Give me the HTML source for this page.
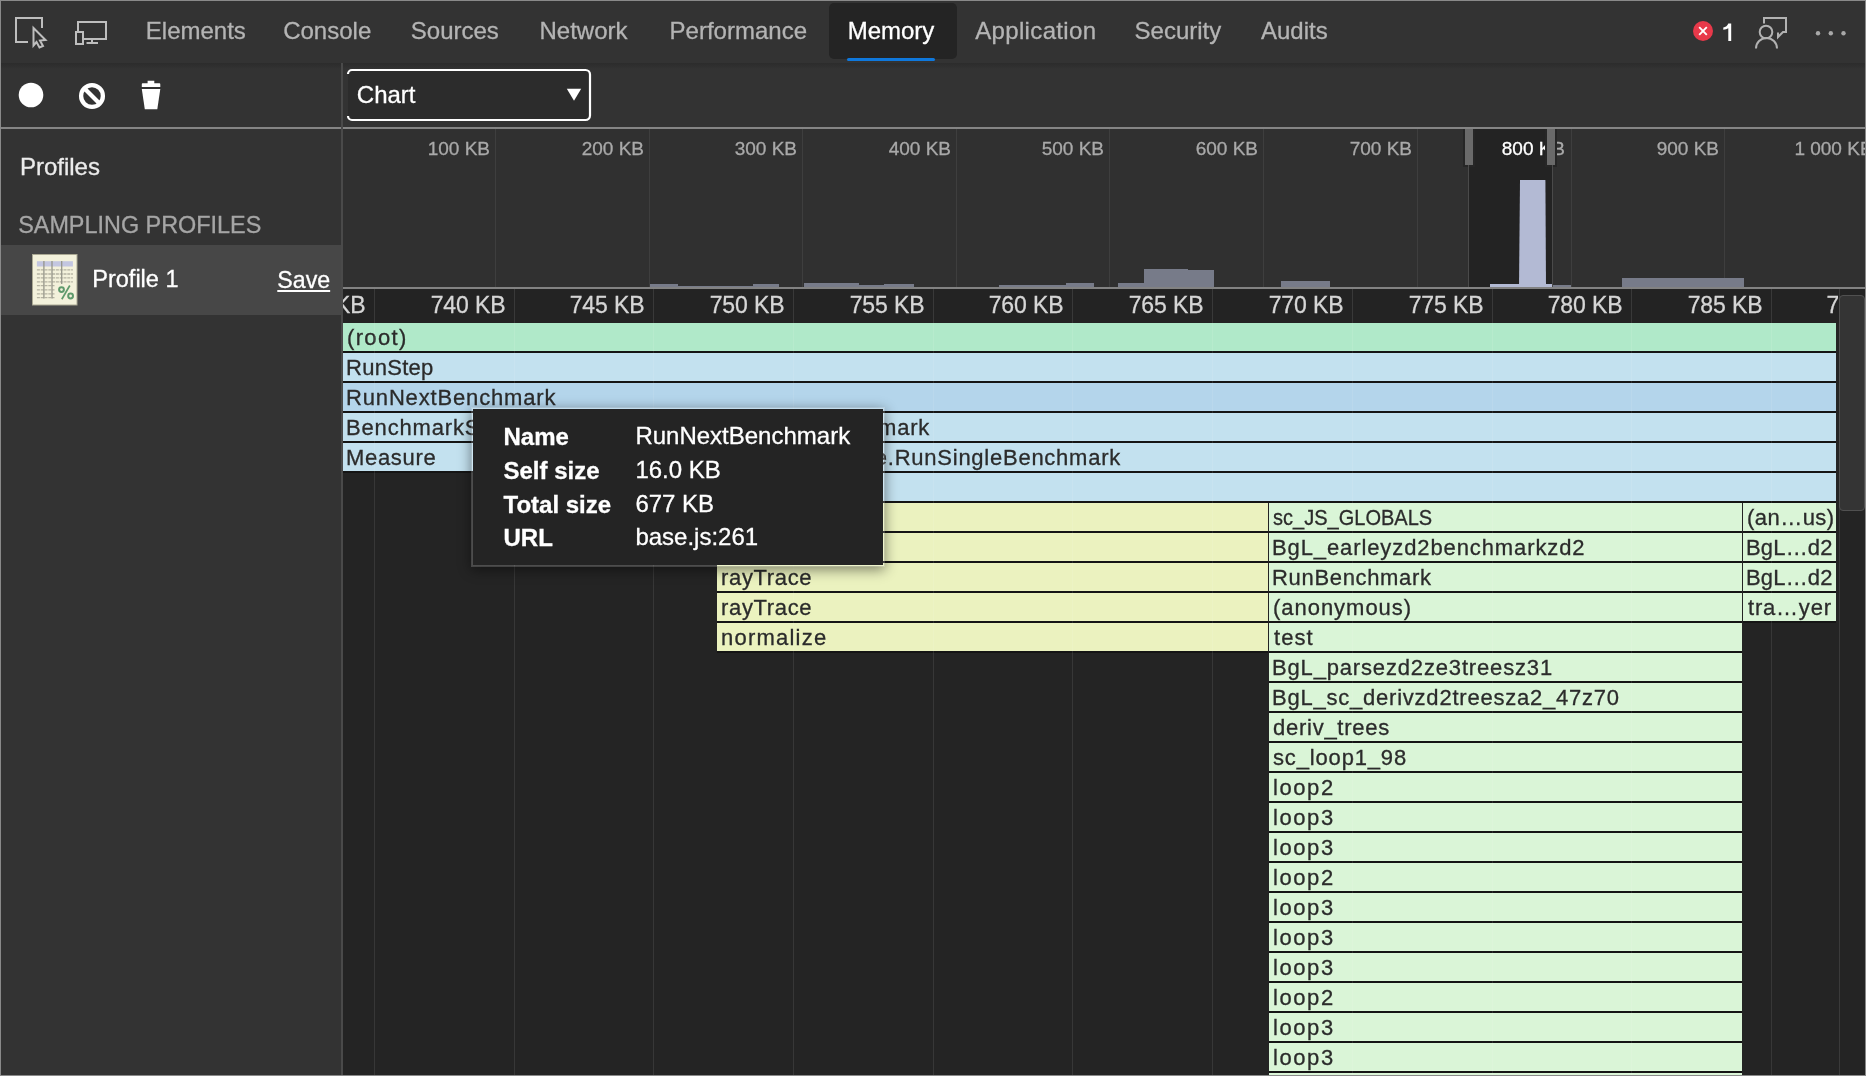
<!DOCTYPE html>
<html><head><meta charset="utf-8"><style>
*{-webkit-font-smoothing:antialiased;-webkit-text-stroke-width:0.3px;}
html,body{margin:0;padding:0;width:1866px;height:1076px;overflow:hidden;background:#242424;font-family:"Liberation Sans", sans-serif;}
#root{will-change:transform;position:relative;width:1866px;height:1076px;overflow:hidden;}
</style></head><body><div id="root">
<div style="position:absolute;left:0px;top:0px;width:1866px;height:63px;background:#333333;"></div>
<div style="position:absolute;left:0px;top:63px;width:1866px;height:65px;background:#333333;"></div>
<div style="position:absolute;left:0;top:63px;width:1866px;height:6px;background:linear-gradient(#2c2c2c,#2e2e2e 35%,#333333)"></div>
<div style="position:absolute;left:829px;top:3px;width:128px;height:56px;background:#242424;border-radius:5px;"></div>
<div style="position:absolute;left:847px;top:58px;width:88px;height:3px;background:#0f78dc;border-radius:2px;"></div>
<div style="position:absolute;left:145.8px;top:18.68px;font-size:24px;line-height:24px;color:#b4b4b4;font-weight:normal;white-space:nowrap;">Elements</div>
<div style="position:absolute;left:283.2px;top:18.68px;font-size:24px;line-height:24px;color:#b4b4b4;font-weight:normal;white-space:nowrap;">Console</div>
<div style="position:absolute;left:410.8px;top:18.68px;font-size:24px;line-height:24px;color:#b4b4b4;font-weight:normal;white-space:nowrap;">Sources</div>
<div style="position:absolute;left:539.5px;top:18.68px;font-size:24px;line-height:24px;color:#b4b4b4;font-weight:normal;white-space:nowrap;">Network</div>
<div style="position:absolute;left:669.6px;top:18.68px;font-size:24px;line-height:24px;color:#b4b4b4;font-weight:normal;white-space:nowrap;">Performance</div>
<div style="position:absolute;left:847.7px;top:18.68px;font-size:24px;line-height:24px;color:#ffffff;font-weight:normal;white-space:nowrap;">Memory</div>
<div style="position:absolute;left:975.2px;top:18.68px;font-size:24px;line-height:24px;color:#b4b4b4;font-weight:normal;white-space:nowrap;letter-spacing:0.35px;">Application</div>
<div style="position:absolute;left:1134.6px;top:18.68px;font-size:24px;line-height:24px;color:#b4b4b4;font-weight:normal;white-space:nowrap;">Security</div>
<div style="position:absolute;left:1261.0px;top:18.68px;font-size:24px;line-height:24px;color:#b4b4b4;font-weight:normal;white-space:nowrap;">Audits</div>
<svg style="position:absolute;left:0;top:0" width="130" height="63" viewBox="0 0 130 63">
<g fill="none" stroke="#bebebe" stroke-width="2">
<path d="M28 42 H16 V18 H42 V28"/>
<path d="M33.5 28 L45.5 40 L40 40.5 L43 46 L39.5 47.5 L36.5 42 L33.5 45.5 Z" stroke-linejoin="miter"/>
<rect x="78" y="22" width="28" height="17"/>
<rect x="76" y="32" width="7" height="12" fill="#333333"/>
<path d="M86.5 43 H98 M92 39 V43"/>
</g></svg>
<svg style="position:absolute;left:1680;top:0" width="186" height="63" viewBox="1680 0 186 63">
<circle cx="1703" cy="31" r="10" fill="#e8394a"/>
<path d="M1699.2 27.2 L1706.8 34.8 M1706.8 27.2 L1699.2 34.8" stroke="#fff" stroke-width="1.9"/>
<g fill="none" stroke="#b2b2b2" stroke-width="2">
<circle cx="1766" cy="32" r="6.3"/>
<path d="M1756 48.5 A10.5 10.5 0 0 1 1777 48.5"/>
<path d="M1764 23.5 V18 H1786 V32 H1783 L1778 37 V32.5"/>
</g>
<circle cx="1818" cy="33.2" r="2.2" fill="#a8a8a8"/>
<circle cx="1830.8" cy="33.2" r="2.2" fill="#a8a8a8"/>
<circle cx="1843.5" cy="33.2" r="2.2" fill="#a8a8a8"/>
</svg>
<svg style="position:absolute;left:1720px;top:20px" width="16" height="24" viewBox="1720 20 16 24"><path d="M1728.3 23.4 H1731.2 V41 H1728.3 V28.2 Q1726.5 29.6 1723.3 29.8 V27.4 Q1727 27 1728.3 23.4 Z" fill="#fff"/></svg>
<svg style="position:absolute;left:0;top:63px" width="342" height="65" viewBox="0 63 342 65">
<circle cx="31" cy="95" r="12.3" fill="#ffffff"/>
<circle cx="92" cy="96" r="10.9" fill="none" stroke="#ffffff" stroke-width="4.3"/>
<path d="M84.5 88.5 L99.5 103.5" stroke="#ffffff" stroke-width="4.3"/>
<path d="M147.6 80.7 H154.3 V83.2 H159.5 Q160.3 83.2 160.3 84.5 V87 H141.8 V84.5 Q141.8 83.2 142.6 83.2 H147.6 Z" fill="#fff"/>
<path d="M141.8 89 H160.3 L157.3 109.2 H144.8 Z" fill="#fff"/>
</svg>
<div style="position:absolute;left:348px;top:70px;width:242px;height:50px;background:#2c2c2c;border-radius:4px;"></div>
<svg style="position:absolute;left:340px;top:60px" width="260" height="70" viewBox="340 60 260 70"><path d="M348 74 A4 4 0 0 1 352 70 H585.5 A4.5 4.5 0 0 1 590 74.5 V115.5 A4.5 4.5 0 0 1 585.5 120 H352 A4 4 0 0 1 348 116" fill="none" stroke="#fff" stroke-width="2.2"/></svg>
<div style="position:absolute;left:356.8px;top:82.88px;font-size:24px;line-height:24px;color:#ffffff;font-weight:normal;white-space:nowrap;">Chart</div>
<svg style="position:absolute;left:566px;top:88px" width="16" height="13" viewBox="0 0 16 13"><path d="M0.8 0.7 H15.2 L8 12.8 Z" fill="#fff"/></svg>
<div style="position:absolute;left:0px;top:127px;width:1866px;height:2px;background:#858585;"></div>
<div style="position:absolute;left:341px;top:63px;width:2px;height:1012px;background:#4a4a4a;"></div>
<div style="position:absolute;left:1px;top:129px;width:340px;height:946px;background:#333333;"></div>
<div style="position:absolute;left:19.9px;top:154.68px;font-size:24px;line-height:24px;color:#ececec;font-weight:normal;white-space:nowrap;">Profiles</div>
<div style="position:absolute;left:18.2px;top:213.89px;font-size:23.4px;line-height:23.4px;color:#a6a6a6;font-weight:normal;white-space:nowrap;">SAMPLING PROFILES</div>
<div style="position:absolute;left:1px;top:245px;width:340px;height:70px;background:#474747;"></div>
<svg style="position:absolute;left:32px;top:254px" width="46" height="52" viewBox="0 0 46 52">
<rect x="0.5" y="0.5" width="44.5" height="50.5" fill="#f3f1db" stroke="#aaa893" stroke-width="1"/>
<rect x="4.9" y="7.2" width="36" height="5.3" fill="#c3c6e0"/>
<g stroke="#b5b3a2" stroke-width="1.3" stroke-dasharray="3 0.8">
<path d="M4.9 15.8 H40.9 M4.9 20 H40.9 M4.9 23.9 H40.9 M4.9 27.8 H40.9 M4.9 31.7 H22.5 M4.9 35.9 H22.5 M4.9 39.8 H22.5 M4.9 43.7 H22.5"/>
</g>
<g stroke="#96968a" stroke-width="1.3">
<path d="M11.9 7 V44.5 M20 7 V44.5 M29.7 7 V30"/>
</g>
<g stroke="#5f9a6c" fill="none">
<circle cx="29.5" cy="35.6" r="2.4" stroke-width="2"/>
<circle cx="38.6" cy="42" r="2.4" stroke-width="2"/>
<path d="M37.8 31.5 L29.8 45.3" stroke-width="1.7"/>
</g>
</svg>
<div style="position:absolute;left:92.3px;top:268.31px;font-size:23.5px;line-height:23.5px;color:#ffffff;font-weight:normal;white-space:nowrap;">Profile 1</div>
<div style="position:absolute;left:277.3px;top:268.56px;font-size:23.2px;line-height:23.2px;color:#ffffff;font-weight:normal;white-space:nowrap;text-decoration:underline;text-underline-offset:2px;text-decoration-thickness:2px;">Save</div>
<div style="position:absolute;left:343px;top:129px;width:1522px;height:158px;background:#303030;"></div>
<div style="position:absolute;left:495px;top:129px;width:1px;height:158px;background:#3e3e3e;"></div>
<div style="position:absolute;left:649px;top:129px;width:1px;height:158px;background:#3e3e3e;"></div>
<div style="position:absolute;left:802px;top:129px;width:1px;height:158px;background:#3e3e3e;"></div>
<div style="position:absolute;left:956px;top:129px;width:1px;height:158px;background:#3e3e3e;"></div>
<div style="position:absolute;left:1109px;top:129px;width:1px;height:158px;background:#3e3e3e;"></div>
<div style="position:absolute;left:1263px;top:129px;width:1px;height:158px;background:#3e3e3e;"></div>
<div style="position:absolute;left:1417px;top:129px;width:1px;height:158px;background:#3e3e3e;"></div>
<div style="position:absolute;left:1570px;top:129px;width:1px;height:158px;background:#3e3e3e;"></div>
<div style="position:absolute;left:1724px;top:129px;width:1px;height:158px;background:#3e3e3e;"></div>
<div style="position:absolute;right:1376px;top:138.92px;font-size:19px;line-height:19px;color:#a9a9a9;font-weight:normal;white-space:nowrap;">100 KB</div>
<div style="position:absolute;right:1222px;top:138.92px;font-size:19px;line-height:19px;color:#a9a9a9;font-weight:normal;white-space:nowrap;">200 KB</div>
<div style="position:absolute;right:1069px;top:138.92px;font-size:19px;line-height:19px;color:#a9a9a9;font-weight:normal;white-space:nowrap;">300 KB</div>
<div style="position:absolute;right:915px;top:138.92px;font-size:19px;line-height:19px;color:#a9a9a9;font-weight:normal;white-space:nowrap;">400 KB</div>
<div style="position:absolute;right:762px;top:138.92px;font-size:19px;line-height:19px;color:#a9a9a9;font-weight:normal;white-space:nowrap;">500 KB</div>
<div style="position:absolute;right:608px;top:138.92px;font-size:19px;line-height:19px;color:#a9a9a9;font-weight:normal;white-space:nowrap;">600 KB</div>
<div style="position:absolute;right:454px;top:138.92px;font-size:19px;line-height:19px;color:#a9a9a9;font-weight:normal;white-space:nowrap;">700 KB</div>
<div style="position:absolute;right:147px;top:138.92px;font-size:19px;line-height:19px;color:#a9a9a9;font-weight:normal;white-space:nowrap;">900 KB</div>
<div style="position:absolute;left:1794.4px;top:138.92px;font-size:19px;line-height:19px;color:#a9a9a9;font-weight:normal;white-space:nowrap;">1&nbsp;000 KB</div>
<div style="position:absolute;left:650px;top:284px;width:28px;height:3px;background:#777b89;"></div>
<div style="position:absolute;left:678px;top:286px;width:75px;height:1px;background:#777b89;"></div>
<div style="position:absolute;left:753px;top:284px;width:26px;height:3px;background:#777b89;"></div>
<div style="position:absolute;left:804px;top:282.5px;width:55px;height:4.5px;background:#777b89;"></div>
<div style="position:absolute;left:859px;top:285px;width:25px;height:2px;background:#777b89;"></div>
<div style="position:absolute;left:884px;top:284px;width:30px;height:3px;background:#777b89;"></div>
<div style="position:absolute;left:999px;top:285px;width:67px;height:2px;background:#777b89;"></div>
<div style="position:absolute;left:1066px;top:282.5px;width:28px;height:4.5px;background:#777b89;"></div>
<div style="position:absolute;left:1118px;top:283px;width:26px;height:4px;background:#777b89;"></div>
<div style="position:absolute;left:1144px;top:269px;width:44px;height:18px;background:#777b89;"></div>
<div style="position:absolute;left:1188px;top:270px;width:25.59999999999991px;height:17px;background:#777b89;"></div>
<div style="position:absolute;left:1281px;top:281px;width:49px;height:6px;background:#777b89;"></div>
<div style="position:absolute;left:1621.5px;top:278.4px;width:122.79999999999995px;height:8.600000000000023px;background:#777b89;"></div>
<div style="position:absolute;left:1553px;top:284.5px;width:18.5px;height:2.5px;background:#777b89;"></div>
<div style="position:absolute;left:1469px;top:129px;width:83px;height:158px;background:#232323;"></div>
<div style="position:absolute;left:1489.6px;top:283.5px;width:62px;height:3.5px;background:#b3bad4;"></div>
<svg style="position:absolute;left:1519px;top:180px" width="28" height="107" viewBox="0 0 28 107"><path d="M1 0 H26.4 L27 107 H0 Z" fill="#b3bad4"/></svg>
<div style="position:absolute;left:1501.8px;top:138.92px;font-size:19px;line-height:19px;color:#ffffff;font-weight:normal;white-space:nowrap;">800 KB</div>
<div style="position:absolute;left:1552px;top:129px;width:20px;height:158px;background:#303030;"></div>
<div style="position:absolute;left:1553px;top:284.5px;width:18.5px;height:2.5px;background:#777b89;"></div>
<div style="position:absolute;right:301px;top:138.92px;font-size:19px;line-height:19px;color:#a9a9a9;font-weight:normal;white-space:nowrap;"><span style="color:transparent">800 K</span>B</div>
<div style="position:absolute;left:1462.7px;top:129px;width:12.6px;height:38px;background:#262626;"></div>
<div style="position:absolute;left:1464.7px;top:129px;width:8.6px;height:36px;background:#6a6a6a;"></div>
<div style="position:absolute;left:1544.8px;top:129px;width:12.4px;height:38px;background:#262626;"></div>
<div style="position:absolute;left:1546.8px;top:129px;width:8.4px;height:36px;background:#6a6a6a;"></div>
<div style="position:absolute;left:1571px;top:129px;width:1px;height:158px;background:#3e3e3e;"></div>
<div style="position:absolute;left:1468px;top:165px;width:1px;height:122px;background:#4a4a4a;"></div>
<div style="position:absolute;left:1552px;top:165px;width:1px;height:122px;background:#4a4a4a;"></div>
<div style="position:absolute;left:343px;top:287px;width:1522px;height:2px;background:#828282;"></div>
<div style="position:absolute;left:343px;top:289px;width:1522px;height:34px;background:#232323;"></div>
<div style="position:absolute;left:0;top:0;width:1866px;height:1076px;clip-path:inset(289px 28px 0 343px);">
<div style="position:absolute;left:343px;top:323px;width:1522px;height:752px;background:#242424;"></div>
<div style="position:absolute;left:374px;top:289px;width:1px;height:34px;background:#393939;"></div>
<div style="position:absolute;left:514px;top:289px;width:1px;height:34px;background:#393939;"></div>
<div style="position:absolute;left:653px;top:289px;width:1px;height:34px;background:#393939;"></div>
<div style="position:absolute;left:793px;top:289px;width:1px;height:34px;background:#393939;"></div>
<div style="position:absolute;left:933px;top:289px;width:1px;height:34px;background:#393939;"></div>
<div style="position:absolute;left:1072px;top:289px;width:1px;height:34px;background:#393939;"></div>
<div style="position:absolute;left:1212px;top:289px;width:1px;height:34px;background:#393939;"></div>
<div style="position:absolute;left:1352px;top:289px;width:1px;height:34px;background:#393939;"></div>
<div style="position:absolute;left:1492px;top:289px;width:1px;height:34px;background:#393939;"></div>
<div style="position:absolute;left:1631px;top:289px;width:1px;height:34px;background:#393939;"></div>
<div style="position:absolute;left:1771px;top:289px;width:1px;height:34px;background:#393939;"></div>
<div style="position:absolute;right:1500.5px;top:293.73px;font-size:23px;line-height:23px;color:#d6d6d6;font-weight:normal;white-space:nowrap;letter-spacing:-0.1px;-webkit-text-stroke:0.3px #d6d6d6;">735 KB</div>
<div style="position:absolute;right:1360.5px;top:293.73px;font-size:23px;line-height:23px;color:#d6d6d6;font-weight:normal;white-space:nowrap;letter-spacing:-0.1px;-webkit-text-stroke:0.3px #d6d6d6;">740 KB</div>
<div style="position:absolute;right:1221.5px;top:293.73px;font-size:23px;line-height:23px;color:#d6d6d6;font-weight:normal;white-space:nowrap;letter-spacing:-0.1px;-webkit-text-stroke:0.3px #d6d6d6;">745 KB</div>
<div style="position:absolute;right:1081.5px;top:293.73px;font-size:23px;line-height:23px;color:#d6d6d6;font-weight:normal;white-space:nowrap;letter-spacing:-0.1px;-webkit-text-stroke:0.3px #d6d6d6;">750 KB</div>
<div style="position:absolute;right:941.5px;top:293.73px;font-size:23px;line-height:23px;color:#d6d6d6;font-weight:normal;white-space:nowrap;letter-spacing:-0.1px;-webkit-text-stroke:0.3px #d6d6d6;">755 KB</div>
<div style="position:absolute;right:802.5px;top:293.73px;font-size:23px;line-height:23px;color:#d6d6d6;font-weight:normal;white-space:nowrap;letter-spacing:-0.1px;-webkit-text-stroke:0.3px #d6d6d6;">760 KB</div>
<div style="position:absolute;right:662.5px;top:293.73px;font-size:23px;line-height:23px;color:#d6d6d6;font-weight:normal;white-space:nowrap;letter-spacing:-0.1px;-webkit-text-stroke:0.3px #d6d6d6;">765 KB</div>
<div style="position:absolute;right:522.5px;top:293.73px;font-size:23px;line-height:23px;color:#d6d6d6;font-weight:normal;white-space:nowrap;letter-spacing:-0.1px;-webkit-text-stroke:0.3px #d6d6d6;">770 KB</div>
<div style="position:absolute;right:382.5px;top:293.73px;font-size:23px;line-height:23px;color:#d6d6d6;font-weight:normal;white-space:nowrap;letter-spacing:-0.1px;-webkit-text-stroke:0.3px #d6d6d6;">775 KB</div>
<div style="position:absolute;right:243.5px;top:293.73px;font-size:23px;line-height:23px;color:#d6d6d6;font-weight:normal;white-space:nowrap;letter-spacing:-0.1px;-webkit-text-stroke:0.3px #d6d6d6;">780 KB</div>
<div style="position:absolute;right:103.5px;top:293.73px;font-size:23px;line-height:23px;color:#d6d6d6;font-weight:normal;white-space:nowrap;letter-spacing:-0.1px;-webkit-text-stroke:0.3px #d6d6d6;">785 KB</div>
<div style="position:absolute;left:1826.5px;top:293.73px;font-size:23px;line-height:23px;color:#d6d6d6;font-weight:normal;white-space:nowrap;-webkit-text-stroke:0.3px #d6d6d6;">7</div>
<div style="position:absolute;left:343px;top:323px;width:1493px;height:28px;background:#b0e9c9;box-shadow:0 2px 0 #151515;"></div>
<div style="position:absolute;left:347px;top:326.98px;font-size:22px;line-height:22px;color:#2b2b2b;font-weight:normal;white-space:nowrap;letter-spacing:1.34px;-webkit-text-stroke:0.3px #2b2b2b;">(root)</div>
<div style="position:absolute;left:343px;top:353px;width:1493px;height:28px;background:#c3e1ef;box-shadow:0 2px 0 #151515;"></div>
<div style="position:absolute;left:346px;top:356.98px;font-size:22px;line-height:22px;color:#2b2b2b;font-weight:normal;white-space:nowrap;letter-spacing:0.283px;-webkit-text-stroke:0.3px #2b2b2b;">RunStep</div>
<div style="position:absolute;left:343px;top:383px;width:1493px;height:28px;background:#b4d5eb;box-shadow:0 2px 0 #151515;"></div>
<div style="position:absolute;left:346px;top:386.98px;font-size:22px;line-height:22px;color:#2b2b2b;font-weight:normal;white-space:nowrap;letter-spacing:0.84px;-webkit-text-stroke:0.3px #2b2b2b;">RunNextBenchmark</div>
<div style="position:absolute;left:343px;top:413px;width:1493px;height:28px;background:#c3e1ef;box-shadow:0 2px 0 #151515;"></div>
<div style="position:absolute;left:346px;top:416.98px;font-size:22px;line-height:22px;color:#2b2b2b;font-weight:normal;white-space:nowrap;letter-spacing:0.84px;-webkit-text-stroke:0.3px #2b2b2b;">BenchmarkSuite.RunSingleBenchmark</div>
<div style="position:absolute;left:343px;top:443px;width:1493px;height:28px;background:#c3e1ef;box-shadow:0 2px 0 #151515;"></div>
<div style="position:absolute;left:346px;top:446.98px;font-size:22px;line-height:22px;color:#2b2b2b;font-weight:normal;white-space:nowrap;letter-spacing:0.683px;-webkit-text-stroke:0.3px #2b2b2b;">Measure</div>
<div style="position:absolute;left:717px;top:473px;width:1119px;height:28px;background:#c3e1ef;box-shadow:0 2px 0 #151515;"></div>
<div style="position:absolute;right:936px;top:416.98px;font-size:22px;line-height:22px;color:#2b2b2b;font-weight:normal;white-space:nowrap;letter-spacing:0.75px;-webkit-text-stroke:0.3px #2b2b2b;">mark</div>
<div style="position:absolute;right:745px;top:446.98px;font-size:22px;line-height:22px;color:#2b2b2b;font-weight:normal;white-space:nowrap;letter-spacing:0.75px;-webkit-text-stroke:0.3px #2b2b2b;">e.RunSingleBenchmark</div>
<div style="position:absolute;left:717px;top:503px;width:551px;height:28px;background:#ebf2bf;box-shadow:0 2px 0 #151515;"></div>
<div style="position:absolute;left:717px;top:533px;width:551px;height:28px;background:#ebf2bf;box-shadow:0 2px 0 #151515;"></div>
<div style="position:absolute;left:717px;top:563px;width:551px;height:28px;background:#ebf2bf;box-shadow:0 2px 0 #151515;"></div>
<div style="position:absolute;left:721px;top:566.98px;font-size:22px;line-height:22px;color:#2b2b2b;font-weight:normal;white-space:nowrap;letter-spacing:0.657px;-webkit-text-stroke:0.3px #2b2b2b;">rayTrace</div>
<div style="position:absolute;left:717px;top:593px;width:551px;height:28px;background:#ebf2bf;box-shadow:0 2px 0 #151515;"></div>
<div style="position:absolute;left:721px;top:596.98px;font-size:22px;line-height:22px;color:#2b2b2b;font-weight:normal;white-space:nowrap;letter-spacing:0.657px;-webkit-text-stroke:0.3px #2b2b2b;">rayTrace</div>
<div style="position:absolute;left:717px;top:623px;width:551px;height:28px;background:#ebf2bf;box-shadow:0 2px 0 #151515;"></div>
<div style="position:absolute;left:721px;top:626.98px;font-size:22px;line-height:22px;color:#2b2b2b;font-weight:normal;white-space:nowrap;letter-spacing:1.225px;-webkit-text-stroke:0.3px #2b2b2b;">normalize</div>
<div style="position:absolute;left:1269px;top:503px;width:473px;height:28px;background:#daf5d7;box-shadow:0 2px 0 #151515;"></div>
<div style="position:absolute;left:1273px;top:506.98px;font-size:22px;line-height:22px;color:#2b2b2b;font-weight:normal;white-space:nowrap;-webkit-text-stroke:0.3px #2b2b2b;transform:scaleX(0.9098);transform-origin:1px 0;">sc_JS_GLOBALS</div>
<div style="position:absolute;left:1269px;top:533px;width:473px;height:28px;background:#daf5d7;box-shadow:0 2px 0 #151515;"></div>
<div style="position:absolute;left:1272px;top:536.98px;font-size:22px;line-height:22px;color:#2b2b2b;font-weight:normal;white-space:nowrap;letter-spacing:0.896px;-webkit-text-stroke:0.3px #2b2b2b;">BgL_earleyzd2benchmarkzd2</div>
<div style="position:absolute;left:1269px;top:563px;width:473px;height:28px;background:#daf5d7;box-shadow:0 2px 0 #151515;"></div>
<div style="position:absolute;left:1272px;top:566.98px;font-size:22px;line-height:22px;color:#2b2b2b;font-weight:normal;white-space:nowrap;letter-spacing:0.673px;-webkit-text-stroke:0.3px #2b2b2b;">RunBenchmark</div>
<div style="position:absolute;left:1269px;top:593px;width:473px;height:28px;background:#daf5d7;box-shadow:0 2px 0 #151515;"></div>
<div style="position:absolute;left:1273px;top:596.98px;font-size:22px;line-height:22px;color:#2b2b2b;font-weight:normal;white-space:nowrap;letter-spacing:0.97px;-webkit-text-stroke:0.3px #2b2b2b;">(anonymous)</div>
<div style="position:absolute;left:1269px;top:623px;width:473px;height:28px;background:#daf5d7;box-shadow:0 2px 0 #151515;"></div>
<div style="position:absolute;left:1274px;top:626.98px;font-size:22px;line-height:22px;color:#2b2b2b;font-weight:normal;white-space:nowrap;letter-spacing:1.067px;-webkit-text-stroke:0.3px #2b2b2b;">test</div>
<div style="position:absolute;left:1269px;top:653px;width:473px;height:28px;background:#daf5d7;box-shadow:0 2px 0 #151515;"></div>
<div style="position:absolute;left:1272px;top:656.98px;font-size:22px;line-height:22px;color:#2b2b2b;font-weight:normal;white-space:nowrap;letter-spacing:0.836px;-webkit-text-stroke:0.3px #2b2b2b;">BgL_parsezd2ze3treesz31</div>
<div style="position:absolute;left:1269px;top:683px;width:473px;height:28px;background:#daf5d7;box-shadow:0 2px 0 #151515;"></div>
<div style="position:absolute;left:1272px;top:686.98px;font-size:22px;line-height:22px;color:#2b2b2b;font-weight:normal;white-space:nowrap;letter-spacing:0.775px;-webkit-text-stroke:0.3px #2b2b2b;">BgL_sc_derivzd2treesza2_47z70</div>
<div style="position:absolute;left:1269px;top:713px;width:473px;height:28px;background:#daf5d7;box-shadow:0 2px 0 #151515;"></div>
<div style="position:absolute;left:1273px;top:716.98px;font-size:22px;line-height:22px;color:#2b2b2b;font-weight:normal;white-space:nowrap;letter-spacing:0.74px;-webkit-text-stroke:0.3px #2b2b2b;">deriv_trees</div>
<div style="position:absolute;left:1269px;top:743px;width:473px;height:28px;background:#daf5d7;box-shadow:0 2px 0 #151515;"></div>
<div style="position:absolute;left:1273px;top:746.98px;font-size:22px;line-height:22px;color:#2b2b2b;font-weight:normal;white-space:nowrap;letter-spacing:0.84px;-webkit-text-stroke:0.3px #2b2b2b;">sc_loop1_98</div>
<div style="position:absolute;left:1269px;top:773px;width:473px;height:28px;background:#daf5d7;box-shadow:0 2px 0 #151515;"></div>
<div style="position:absolute;left:1273px;top:776.98px;font-size:22px;line-height:22px;color:#2b2b2b;font-weight:normal;white-space:nowrap;letter-spacing:1.575px;-webkit-text-stroke:0.3px #2b2b2b;">loop2</div>
<div style="position:absolute;left:1269px;top:803px;width:473px;height:28px;background:#daf5d7;box-shadow:0 2px 0 #151515;"></div>
<div style="position:absolute;left:1273px;top:806.98px;font-size:22px;line-height:22px;color:#2b2b2b;font-weight:normal;white-space:nowrap;letter-spacing:1.575px;-webkit-text-stroke:0.3px #2b2b2b;">loop3</div>
<div style="position:absolute;left:1269px;top:833px;width:473px;height:28px;background:#daf5d7;box-shadow:0 2px 0 #151515;"></div>
<div style="position:absolute;left:1273px;top:836.98px;font-size:22px;line-height:22px;color:#2b2b2b;font-weight:normal;white-space:nowrap;letter-spacing:1.575px;-webkit-text-stroke:0.3px #2b2b2b;">loop3</div>
<div style="position:absolute;left:1269px;top:863px;width:473px;height:28px;background:#daf5d7;box-shadow:0 2px 0 #151515;"></div>
<div style="position:absolute;left:1273px;top:866.98px;font-size:22px;line-height:22px;color:#2b2b2b;font-weight:normal;white-space:nowrap;letter-spacing:1.575px;-webkit-text-stroke:0.3px #2b2b2b;">loop2</div>
<div style="position:absolute;left:1269px;top:893px;width:473px;height:28px;background:#daf5d7;box-shadow:0 2px 0 #151515;"></div>
<div style="position:absolute;left:1273px;top:896.98px;font-size:22px;line-height:22px;color:#2b2b2b;font-weight:normal;white-space:nowrap;letter-spacing:1.575px;-webkit-text-stroke:0.3px #2b2b2b;">loop3</div>
<div style="position:absolute;left:1269px;top:923px;width:473px;height:28px;background:#daf5d7;box-shadow:0 2px 0 #151515;"></div>
<div style="position:absolute;left:1273px;top:926.98px;font-size:22px;line-height:22px;color:#2b2b2b;font-weight:normal;white-space:nowrap;letter-spacing:1.575px;-webkit-text-stroke:0.3px #2b2b2b;">loop3</div>
<div style="position:absolute;left:1269px;top:953px;width:473px;height:28px;background:#daf5d7;box-shadow:0 2px 0 #151515;"></div>
<div style="position:absolute;left:1273px;top:956.98px;font-size:22px;line-height:22px;color:#2b2b2b;font-weight:normal;white-space:nowrap;letter-spacing:1.575px;-webkit-text-stroke:0.3px #2b2b2b;">loop3</div>
<div style="position:absolute;left:1269px;top:983px;width:473px;height:28px;background:#daf5d7;box-shadow:0 2px 0 #151515;"></div>
<div style="position:absolute;left:1273px;top:986.98px;font-size:22px;line-height:22px;color:#2b2b2b;font-weight:normal;white-space:nowrap;letter-spacing:1.575px;-webkit-text-stroke:0.3px #2b2b2b;">loop2</div>
<div style="position:absolute;left:1269px;top:1013px;width:473px;height:28px;background:#daf5d7;box-shadow:0 2px 0 #151515;"></div>
<div style="position:absolute;left:1273px;top:1016.98px;font-size:22px;line-height:22px;color:#2b2b2b;font-weight:normal;white-space:nowrap;letter-spacing:1.575px;-webkit-text-stroke:0.3px #2b2b2b;">loop3</div>
<div style="position:absolute;left:1269px;top:1043px;width:473px;height:28px;background:#daf5d7;box-shadow:0 2px 0 #151515;"></div>
<div style="position:absolute;left:1273px;top:1046.98px;font-size:22px;line-height:22px;color:#2b2b2b;font-weight:normal;white-space:nowrap;letter-spacing:1.575px;-webkit-text-stroke:0.3px #2b2b2b;">loop3</div>
<div style="position:absolute;left:1269px;top:1073px;width:473px;height:28px;background:#daf5d7;box-shadow:0 2px 0 #151515;"></div>
<div style="position:absolute;left:1273px;top:1076.98px;font-size:22px;line-height:22px;color:#2b2b2b;font-weight:normal;white-space:nowrap;letter-spacing:1.575px;-webkit-text-stroke:0.3px #2b2b2b;">loop3</div>
<div style="position:absolute;left:1743px;top:503px;width:93px;height:28px;background:#daf5d7;box-shadow:0 2px 0 #151515;"></div>
<div style="position:absolute;left:1747px;top:506.98px;font-size:22px;line-height:22px;color:#2b2b2b;font-weight:normal;white-space:nowrap;letter-spacing:0.467px;-webkit-text-stroke:0.3px #2b2b2b;">(an…us)</div>
<div style="position:absolute;left:1743px;top:533px;width:93px;height:28px;background:#daf5d7;box-shadow:0 2px 0 #151515;"></div>
<div style="position:absolute;left:1746px;top:536.98px;font-size:22px;line-height:22px;color:#2b2b2b;font-weight:normal;white-space:nowrap;letter-spacing:0.18px;-webkit-text-stroke:0.3px #2b2b2b;">BgL…d2</div>
<div style="position:absolute;left:1743px;top:563px;width:93px;height:28px;background:#daf5d7;box-shadow:0 2px 0 #151515;"></div>
<div style="position:absolute;left:1746px;top:566.98px;font-size:22px;line-height:22px;color:#2b2b2b;font-weight:normal;white-space:nowrap;letter-spacing:0.18px;-webkit-text-stroke:0.3px #2b2b2b;">BgL…d2</div>
<div style="position:absolute;left:1743px;top:593px;width:93px;height:28px;background:#daf5d7;box-shadow:0 2px 0 #151515;"></div>
<div style="position:absolute;left:1748px;top:596.98px;font-size:22px;line-height:22px;color:#2b2b2b;font-weight:normal;white-space:nowrap;letter-spacing:0.8px;-webkit-text-stroke:0.3px #2b2b2b;">tra…yer</div>
<div style="position:absolute;left:374px;top:323px;width:1px;height:752px;background:rgba(255,255,255,0.09);"></div>
<div style="position:absolute;left:514px;top:323px;width:1px;height:752px;background:rgba(255,255,255,0.09);"></div>
<div style="position:absolute;left:653px;top:323px;width:1px;height:752px;background:rgba(255,255,255,0.09);"></div>
<div style="position:absolute;left:793px;top:323px;width:1px;height:752px;background:rgba(255,255,255,0.09);"></div>
<div style="position:absolute;left:933px;top:323px;width:1px;height:752px;background:rgba(255,255,255,0.09);"></div>
<div style="position:absolute;left:1072px;top:323px;width:1px;height:752px;background:rgba(255,255,255,0.09);"></div>
<div style="position:absolute;left:1212px;top:323px;width:1px;height:752px;background:rgba(255,255,255,0.09);"></div>
<div style="position:absolute;left:1352px;top:323px;width:1px;height:752px;background:rgba(255,255,255,0.09);"></div>
<div style="position:absolute;left:1492px;top:323px;width:1px;height:752px;background:rgba(255,255,255,0.09);"></div>
<div style="position:absolute;left:1631px;top:323px;width:1px;height:752px;background:rgba(255,255,255,0.09);"></div>
<div style="position:absolute;left:1771px;top:323px;width:1px;height:752px;background:rgba(255,255,255,0.09);"></div>
</div>
<div style="position:absolute;left:1839px;top:289px;width:1px;height:786px;background:#3a3a3a;"></div>
<div style="position:absolute;left:1839px;top:295px;width:26px;height:216px;background:#343434;box-sizing:border-box;border:1px solid #505050;border-radius:4px;"></div>
<div style="position:absolute;left:471px;top:407px;width:414px;height:160px;box-sizing:border-box;border:2px solid rgba(255,255,255,0.19);background:#242424;background-clip:padding-box;box-shadow:0 3px 12px rgba(0,0,0,0.45);"></div>
<div style="position:absolute;left:503.5px;top:424.68px;font-size:24px;line-height:24px;color:#ffffff;font-weight:bold;white-space:nowrap;">Name</div>
<div style="position:absolute;left:635.4px;top:423.68px;font-size:24px;line-height:24px;color:#ffffff;font-weight:normal;white-space:nowrap;">RunNextBenchmark</div>
<div style="position:absolute;left:503.5px;top:459.18px;font-size:24px;line-height:24px;color:#ffffff;font-weight:bold;white-space:nowrap;">Self size</div>
<div style="position:absolute;left:635.4px;top:458.18px;font-size:24px;line-height:24px;color:#ffffff;font-weight:normal;white-space:nowrap;">16.0 KB</div>
<div style="position:absolute;left:503.5px;top:492.68px;font-size:24px;line-height:24px;color:#ffffff;font-weight:bold;white-space:nowrap;">Total size</div>
<div style="position:absolute;left:635.4px;top:491.68px;font-size:24px;line-height:24px;color:#ffffff;font-weight:normal;white-space:nowrap;">677 KB</div>
<div style="position:absolute;left:503.5px;top:526.28px;font-size:24px;line-height:24px;color:#ffffff;font-weight:bold;white-space:nowrap;">URL</div>
<div style="position:absolute;left:635.4px;top:525.28px;font-size:24px;line-height:24px;color:#ffffff;font-weight:normal;white-space:nowrap;">base.js:261</div>
<div style="position:absolute;left:0;top:0;width:1866px;height:1076px;box-sizing:border-box;border:1px solid #8a8a8a;"></div>
</div></body></html>
